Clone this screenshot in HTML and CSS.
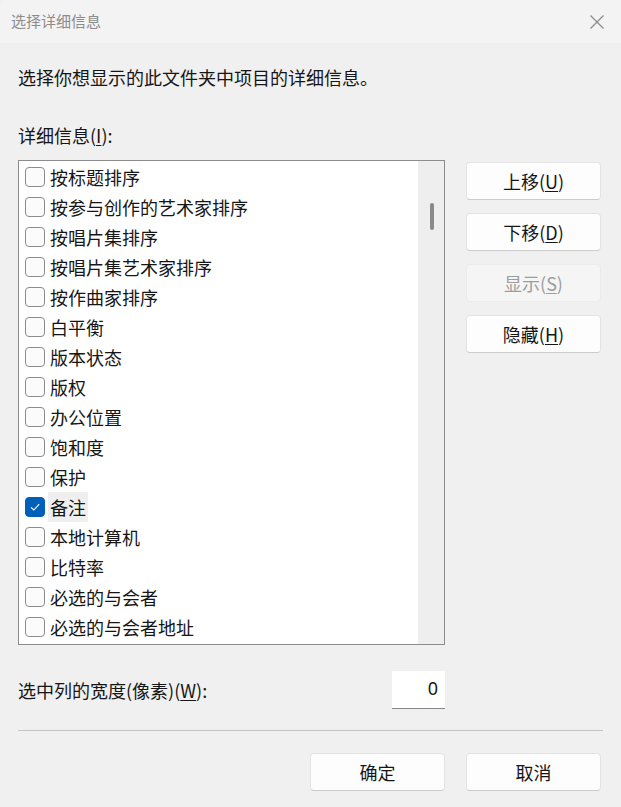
FILE: index.html
```html
<!DOCTYPE html>
<html lang="zh-CN">
<head>
<meta charset="utf-8">
<title>选择详细信息</title>
<link rel="stylesheet" href="styles.css">
</head>
<body>
<div class="window">
  <div class="titlebar">
    <span class="title">选择详细信息</span>
    <span class="close">
      <svg width="16" height="16" viewBox="0 0 16 16"><path d="M1.5 1.5 L14.5 14.5 M14.5 1.5 L1.5 14.5" stroke="#8a8a8a" stroke-width="1.2" fill="none"/></svg>
    </span>
  </div>
  <div class="content">
    <p class="intro">选择你想显示的此文件夹中项目的详细信息。</p>
    <p class="label">详细信息(<u>I</u>):</p>
    <div class="main">
      <div class="list">
        <div class="rows">
          <div class="row"><span class="box"></span><span class="text">按标题排序</span></div>
          <div class="row"><span class="box"></span><span class="text">按参与创作的艺术家排序</span></div>
          <div class="row"><span class="box"></span><span class="text">按唱片集排序</span></div>
          <div class="row"><span class="box"></span><span class="text">按唱片集艺术家排序</span></div>
          <div class="row"><span class="box"></span><span class="text">按作曲家排序</span></div>
          <div class="row"><span class="box"></span><span class="text">白平衡</span></div>
          <div class="row"><span class="box"></span><span class="text">版本状态</span></div>
          <div class="row"><span class="box"></span><span class="text">版权</span></div>
          <div class="row"><span class="box"></span><span class="text">办公位置</span></div>
          <div class="row"><span class="box"></span><span class="text">饱和度</span></div>
          <div class="row"><span class="box"></span><span class="text">保护</span></div>
          <div class="row"><span class="box checked"><svg width="12" height="12" viewBox="0 0 12 12"><path d="M2 6.3 L4.8 9 L10.2 3.2" stroke="#fff" stroke-width="1.1" fill="none"/></svg></span><span class="text selected">备注</span></div>
          <div class="row"><span class="box"></span><span class="text">本地计算机</span></div>
          <div class="row"><span class="box"></span><span class="text">比特率</span></div>
          <div class="row"><span class="box"></span><span class="text">必选的与会者</span></div>
          <div class="row"><span class="box"></span><span class="text">必选的与会者地址</span></div>
        </div>
        <div class="scrollbar"><div class="thumb"></div></div>
      </div>
      <div class="side">
        <button class="btn">上移(<u>U</u>)</button>
        <button class="btn">下移(<u>D</u>)</button>
        <button class="btn disabled">显示(<u>S</u>)</button>
        <button class="btn">隐藏(<u>H</u>)</button>
      </div>
    </div>
    <div class="width-row">
      <span class="width-label">选中列的宽度(像素)(<u>W</u>):</span>
      <div class="input">0</div>
    </div>
    <div class="sep"></div>
    <div class="footer">
      <button class="btn">确定</button>
      <button class="btn">取消</button>
    </div>
  </div>
</div>
</body>
</html>
```

FILE: styles.css
```css
* { box-sizing: border-box; }
html, body { margin: 0; padding: 0; }
body {
  background: #f0f0f0;
  font-family: "Noto Sans CJK SC", "Noto Sans", sans-serif;
  color: #161616;
}
.window {
  width: 621px;
  height: 807px;
  background: #f0f0f0;
  overflow: hidden;
}
.titlebar {
  height: 43px;
  background: #f3f3f3;
  display: flex;
  align-items: center;
  justify-content: space-between;
  padding: 0 16px 2px 11px;
  border-top-left-radius: 8px;
}
.title {
  font-size: 15px;
  line-height: 20px;
  color: #8c8c8c;
}
.close { display: flex; width: 16px; height: 16px; margin-top: 2px; }
.content { padding: 0 20px 0 18px; }
.intro {
  margin: 22px 0 0;
  font-size: 18px;
  line-height: 24px;
}
.label {
  margin: 34px 0 0;
  font-size: 18px;
  line-height: 24px;
}
u { text-decoration: underline; text-underline-offset: 2px; text-decoration-thickness: 1px; }
.main {
  display: flex;
  margin-top: 13px;
  align-items: flex-start;
}
.list {
  width: 427px;
  height: 485px;
  border: 1px solid #8c8c8c;
  background: #fff;
  display: flex;
  overflow: hidden;
}
.rows {
  flex: 1;
  padding: 1px 0 0 6px;
}
.row {
  height: 30px;
  display: flex;
  align-items: center;
}
.box {
  width: 20px;
  height: 20px;
  border: 1px solid #8b8b8b;
  border-radius: 4px;
  background: #fbfbfb;
  margin-right: 3px;
  display: flex;
  align-items: center;
  justify-content: center;
  flex: none;
}
.box.checked {
  background: #005fb8;
  border-color: #005fb8;
}
.text {
  font-size: 18px;
  line-height: 30px;
  padding: 0 2px;
  white-space: nowrap;
}
.text.selected { background: #efefef; }
.scrollbar {
  width: 26px;
  background: #eeeeee;
  display: flex;
  justify-content: center;
  padding-top: 42px;
}
.thumb {
  width: 4px;
  height: 27px;
  border-radius: 2px;
  background: #8a8a8a;
  margin-left: 1px;
}
.side {
  display: flex;
  flex-direction: column;
  gap: 13px;
  margin-left: 21px;
  margin-top: 2px;
}
.btn {
  width: 135px;
  height: 38px;
  background: #fdfdfd;
  border: 1px solid #e3e3e3;
  border-bottom-color: #cbcbcb;
  border-radius: 4px;
  font-family: "Noto Sans CJK SC", "Noto Sans", sans-serif;
  font-size: 18px;
  line-height: 24px;
  color: #161616;
  padding: 0;
}
.btn.disabled {
  background: #f5f5f5;
  border-color: #ebebeb;
  color: #9d9d9d;
}
.width-row {
  width: 427px;
  margin-top: 26px;
  display: flex;
  align-items: center;
  justify-content: space-between;
}
.width-label {
  font-size: 18px;
  line-height: 24px;
}
.input {
  width: 53px;
  height: 38px;
  background: #fff;
  border-bottom: 1px solid #868686;
  text-align: right;
  padding-right: 7px;
  font-family: "Noto Sans", sans-serif;
  font-size: 18px;
  line-height: 34px;
}
.sep {
  margin-top: 21px;
  width: 585px;
  height: 1px;
  background: #c4c4c4;
}
.footer {
  margin-top: 22px;
  display: flex;
  justify-content: flex-end;
  gap: 21px;
}
```
